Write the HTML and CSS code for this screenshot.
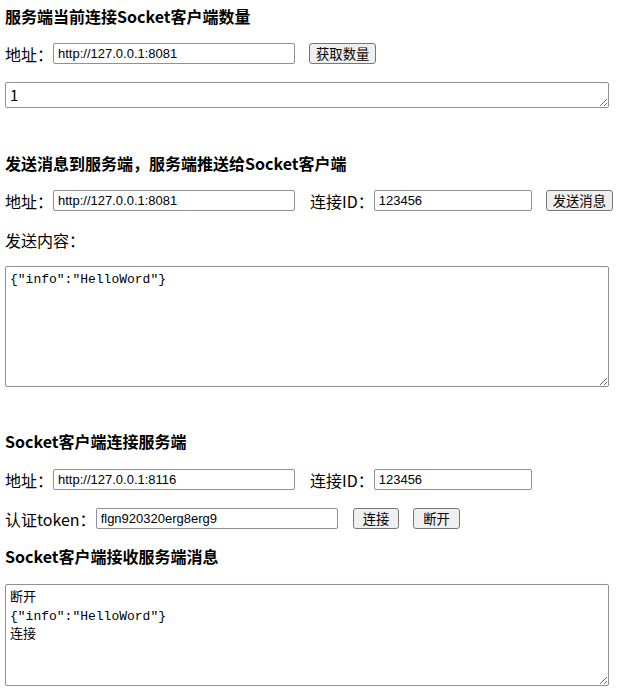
FILE: index.html
```html
<!DOCTYPE html>
<html lang="zh-CN">
<head>
<meta charset="utf-8">
<title>Socket</title>
<link rel="stylesheet" href="styles.css">
</head>
<body>
<div class="page">
  <h3 class="title t1">服务端当前连接Socket客户端数量</h3>
  <div class="row r1">
    <span class="lbl">地址：</span><input class="in in-addr" type="text" value="http://127.0.0.1:8081"><button class="btn gap14">获取数量</button>
  </div>
  <textarea class="ta ta1">1</textarea>

  <h3 class="title t2">发送消息到服务端，服务端推送给Socket客户端</h3>
  <div class="row r2">
    <span class="lbl">地址：</span><input class="in in-addr" type="text" value="http://127.0.0.1:8081"><span class="lbl gap15">连接ID：</span><input class="in in-id" type="text" value="123456"><button class="btn gap14">发送消息</button>
  </div>
  <div class="lbl-line">发送内容：</div>
  <textarea class="ta ta2">{"info":"HelloWord"}</textarea>

  <h3 class="title t3">Socket客户端连接服务端</h3>
  <div class="row r3">
    <span class="lbl">地址：</span><input class="in in-addr" type="text" value="http://127.0.0.1:8116"><span class="lbl gap15">连接ID：</span><input class="in in-id" type="text" value="123456">
  </div>
  <div class="row r4">
    <span class="lbl">认证token：</span><input class="in in-addr" type="text" value="flgn920320erg8erg9"><button class="btn btn-wide gap15">连接</button><button class="btn btn-wide gap14">断开</button>
  </div>
  <h3 class="title t4">Socket客户端接收服务端消息</h3>
  <textarea class="ta ta3">断开
{"info":"HelloWord"}
连接</textarea>
</div>
</body>
</html>
```
FILE: styles.css
```css
html, body {
  margin: 0;
  padding: 0;
  background: #ffffff;
}
body {
  font-family: "Noto Sans CJK SC", "Noto Sans", sans-serif;
  font-size: 16px;
  color: #000;
}
.page {
  padding: 6px 5px 0 5px;
  display: flex;
  flex-direction: column;
  align-items: flex-start;
}
.title {
  margin: 0;
  font-size: 16px;
  font-weight: bold;
  line-height: 20px;
  height: 20px;
  white-space: nowrap;
}
.t2 { margin-top: 45px; }
.t3 { margin-top: 44px; }
.t4 { margin-top: 17px; }
.row {
  display: flex;
  align-items: center;
  height: 21px;
}
.r1 { margin-top: 17px; }
.r2 { margin-top: 17px; }
.r3 { margin-top: 18px; }
.r4 { margin-top: 18px; }
.lbl {
  font-size: 16px;
  line-height: 20px;
  white-space: nowrap;
}
.lbl-line {
  margin-top: 19px;
  font-size: 16px;
  line-height: 20px;
  height: 20px;
}
.gap14 { margin-left: 14px; }
.gap15 { margin-left: 15px; }
.in {
  box-sizing: border-box;
  height: 21px;
  margin: 0;
  padding: 1px 4px;
  border: 1px solid #8f8f9d;
  border-radius: 2px;
  font-family: "Liberation Sans", "Noto Sans CJK SC", sans-serif;
  font-size: 13px;
  color: #000;
  background: #fff;
}
.in-addr { width: 242px; }
.in-id { width: 158px; }
.btn {
  box-sizing: border-box;
  height: 21px;
  margin-top: 0;
  margin-bottom: 0;
  padding: 0 6px;
  border: 1px solid #767676;
  border-radius: 3px;
  background: #efefef;
  font-family: "Noto Sans CJK SC", sans-serif;
  font-size: 13.33px;
  line-height: 17px;
  color: #000;
  white-space: nowrap;
}
.btn-wide {
  padding: 0 9px;
}
.ta {
  display: block;
  box-sizing: border-box;
  width: 604px;
  margin: 0;
  padding: 4px 4px 2px 4px;
  border: 1px solid #8f8f9d;
  border-radius: 2px;
  font-family: "Liberation Mono", "Noto Sans CJK SC", monospace;
  font-size: 13px;
  line-height: 18.5px;
  color: #000;
  background: #fff;
}
.ta1 {
  margin-top: 18px;
  height: 26px;
  padding-top: 2px;
  font-family: "Noto Sans CJK SC", sans-serif;
  font-size: 15px;
  line-height: 20px;
}
.ta2 {
  margin-top: 16px;
  height: 121px;
}
.ta3 {
  margin-top: 18px;
  height: 102px;
}
```
